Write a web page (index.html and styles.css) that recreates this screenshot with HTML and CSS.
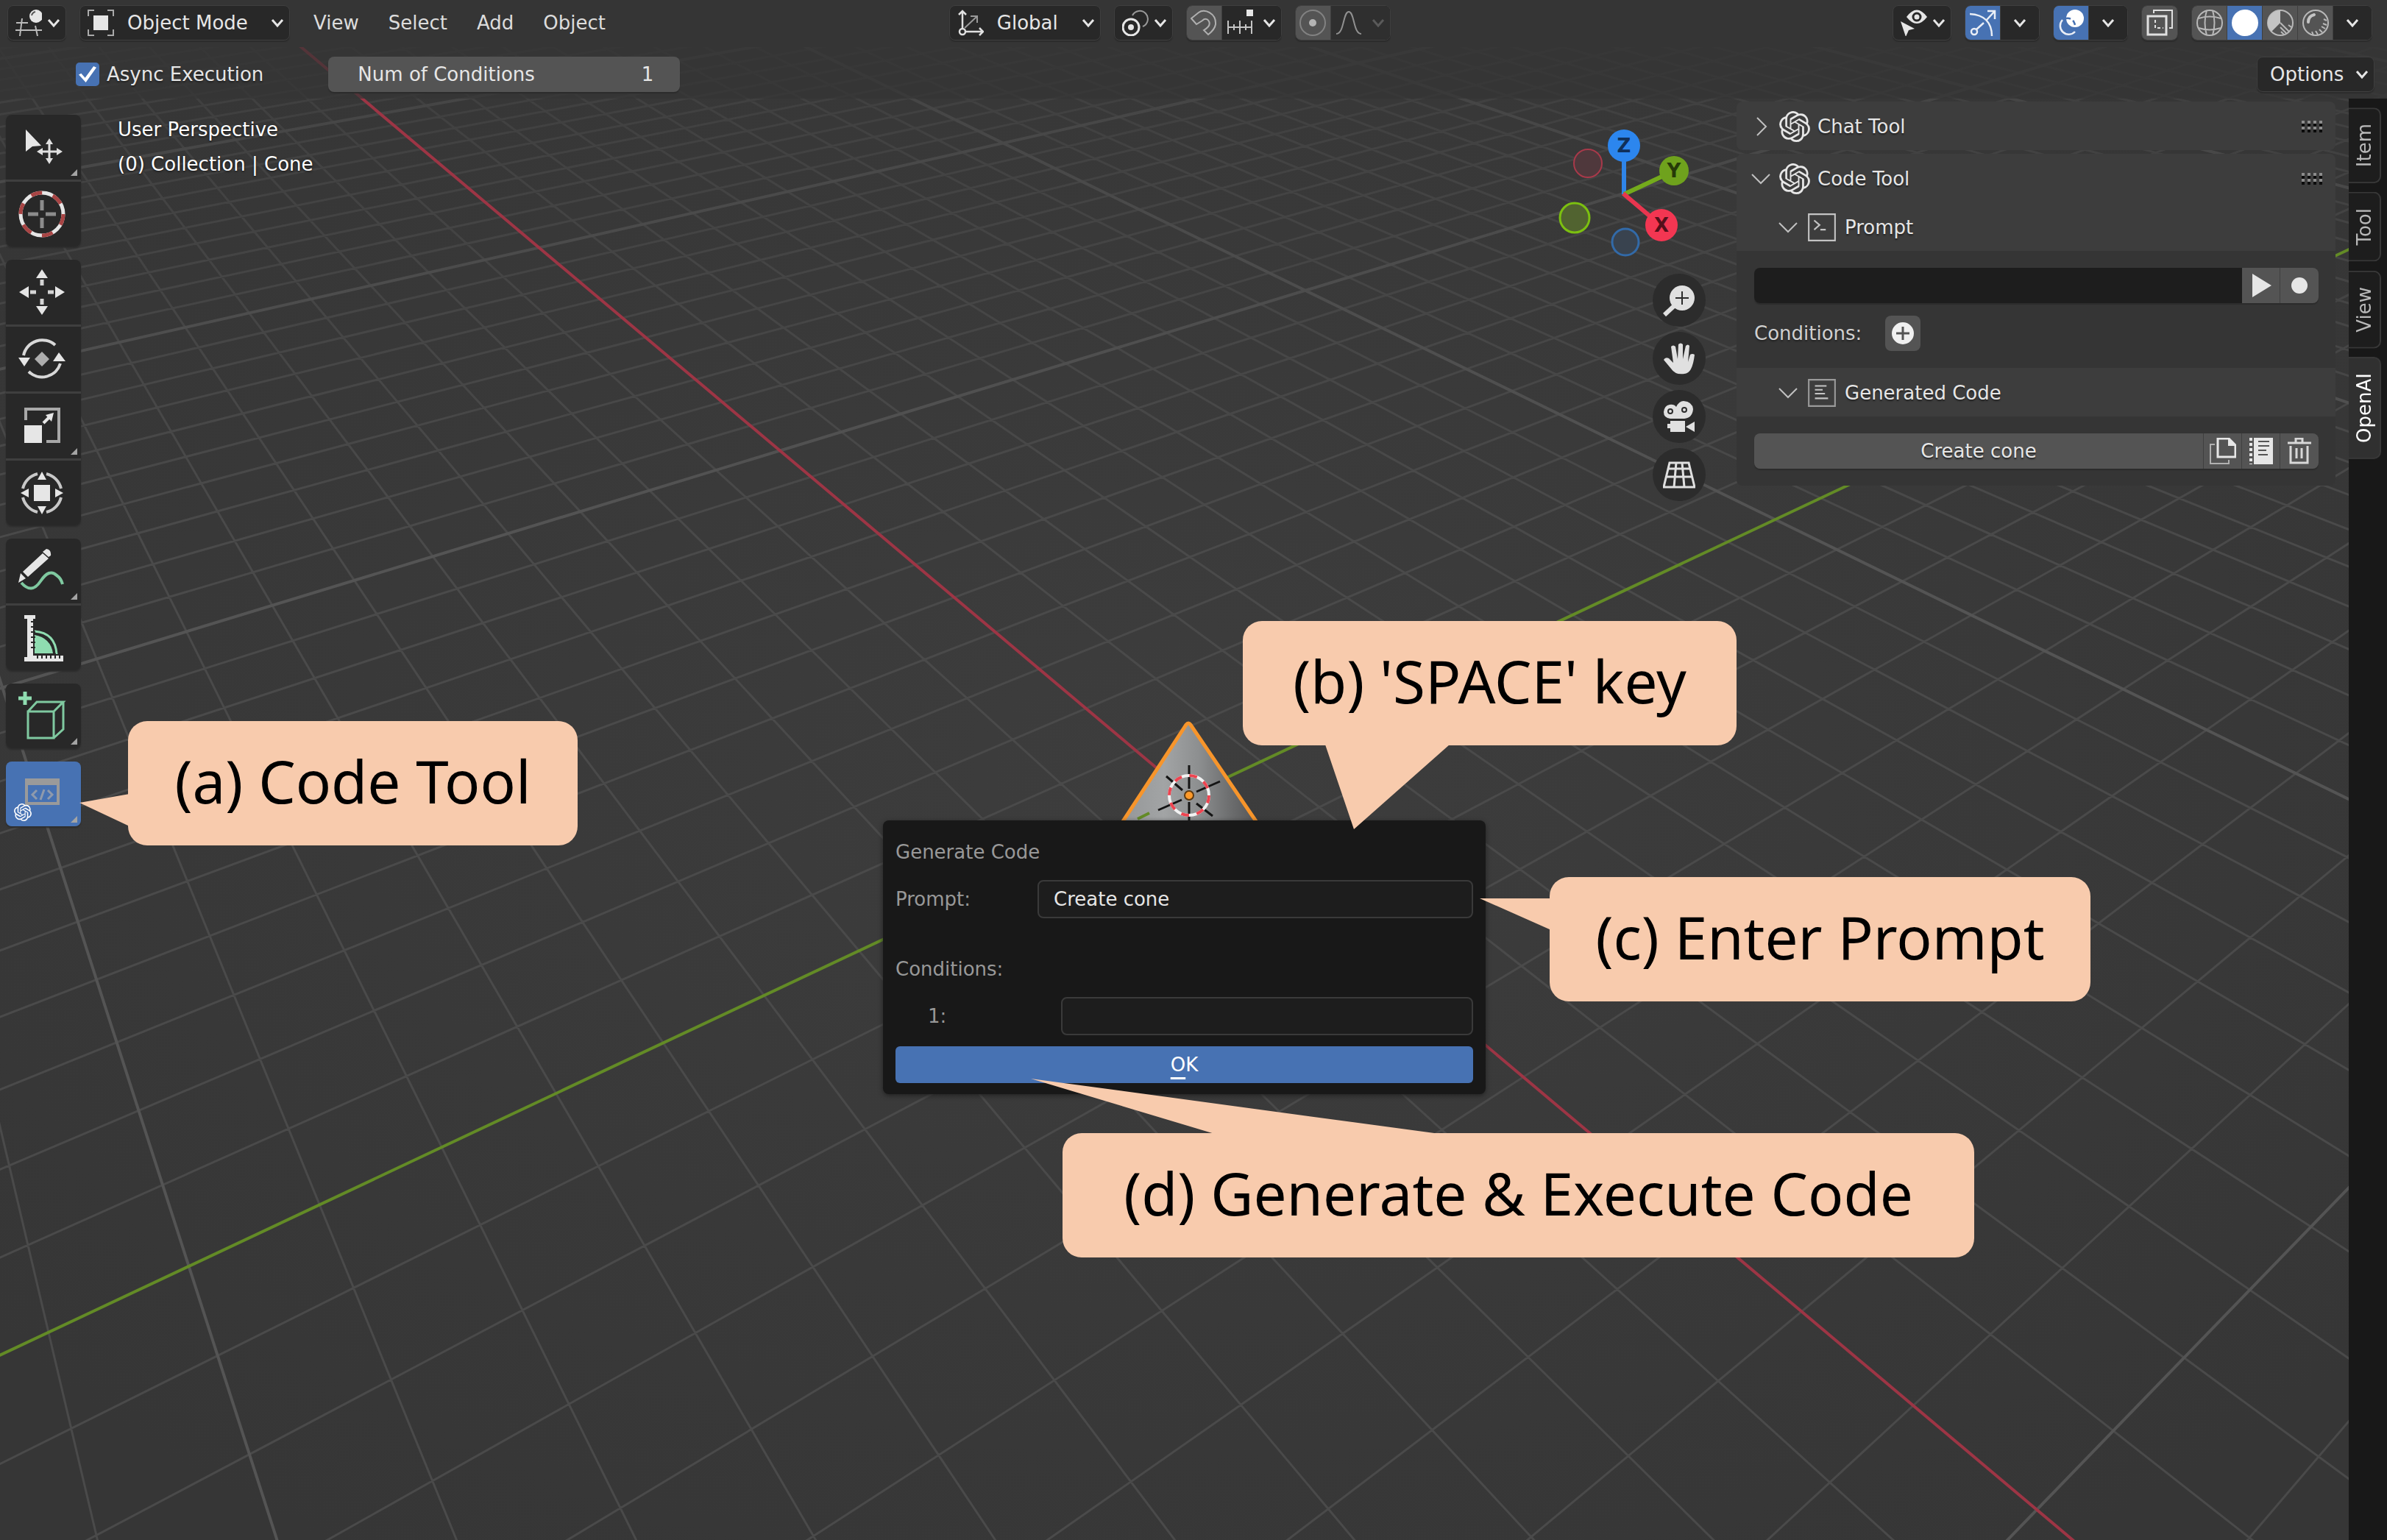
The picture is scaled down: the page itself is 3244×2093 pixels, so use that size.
FILE: index.html
```html
<!DOCTYPE html>
<html lang="en">
<head>
<meta charset="utf-8">
<title>3D Viewport</title>
<link rel="stylesheet" href="styles.css">
</head>
<body>
<svg class="defs" aria-hidden="true">
  <symbol id="chevron" viewBox="0 0 20 20"><path d="M3 6l7 8 7-8" fill="none" stroke="currentColor" stroke-width="3"/></symbol>
  <symbol id="chevron-thin" viewBox="0 0 28 28"><path d="M2 8l12 12L26 8" fill="none" stroke="currentColor" stroke-width="2"/></symbol>
  <symbol id="chevron-right" viewBox="0 0 28 28"><path d="M9 2l12 12L9 26" fill="none" stroke="currentColor" stroke-width="2"/></symbol>
  <symbol id="grip" viewBox="0 0 28 16"><path d="M0 6h28M0 14h28" fill="none" stroke="#0c0c0c" stroke-width="4" stroke-dasharray="4 4"/><path d="M0 2h28M0 10h28" fill="none" stroke="#8c8c8c" stroke-width="4" stroke-dasharray="4 4"/></symbol>
  <symbol id="knot" viewBox="0 0 24 24"><path fill="currentColor" d="M22.2819 9.8211a5.9847 5.9847 0 0 0-.5157-4.9108 6.0462 6.0462 0 0 0-6.5098-2.9A6.0651 6.0651 0 0 0 4.9807 4.1818a5.9847 5.9847 0 0 0-3.9977 2.9 6.0462 6.0462 0 0 0 .7427 7.0966 5.98 5.98 0 0 0 .511 4.9107 6.051 6.051 0 0 0 6.5146 2.9001A5.9847 5.9847 0 0 0 13.2599 24a6.0557 6.0557 0 0 0 5.7718-4.2058 5.9894 5.9894 0 0 0 3.9977-2.9001 6.0557 6.0557 0 0 0-.7475-7.0729zm-9.022 12.6081a4.4755 4.4755 0 0 1-2.8764-1.0408l.1419-.0804 4.7783-2.7582a.7948.7948 0 0 0 .3927-.6813v-6.7369l2.02 1.1686a.071.071 0 0 1 .038.052v5.5826a4.504 4.504 0 0 1-4.4945 4.4944zm-9.6607-4.1254a4.4708 4.4708 0 0 1-.5346-3.0137l.142.0852 4.783 2.7582a.7712.7712 0 0 0 .7806 0l5.8428-3.3685v2.3324a.0804.0804 0 0 1-.0332.0615L9.74 19.9502a4.4992 4.4992 0 0 1-6.1408-1.6464zM2.3408 7.8956a4.485 4.485 0 0 1 2.3655-1.9728V11.6a.7664.7664 0 0 0 .3879.6765l5.8144 3.3543-2.0201 1.1685a.0757.0757 0 0 1-.071 0l-4.8303-2.7865A4.504 4.504 0 0 1 2.3408 7.872zm16.5963 3.8558L13.1038 8.364 15.1192 7.2a.0757.0757 0 0 1 .071 0l4.8303 2.7913a4.4944 4.4944 0 0 1-.6765 8.1042v-5.6772a.79.79 0 0 0-.407-.667zm2.0107-3.0231l-.142-.0852-4.7735-2.7818a.7759.7759 0 0 0-.7854 0L9.409 9.2297V6.8974a.0662.0662 0 0 1 .0284-.0615l4.8303-2.7866a4.4992 4.4992 0 0 1 6.6802 4.66zM8.3065 12.863l-2.02-1.1638a.0804.0804 0 0 1-.038-.0567V6.0742a4.4992 4.4992 0 0 1 7.3757-3.4537l-.142.0805L8.704 5.459a.7948.7948 0 0 0-.3927.6813zm1.0976-2.3654l2.602-1.4998 2.6069 1.4998v2.9994l-2.5974 1.4997-2.6067-1.4997Z"/></symbol>
</svg>

<div class="app">
  <svg class="scene" viewBox="0 0 3244 2093" preserveAspectRatio="xMidYMid slice" aria-hidden="true">
    <defs>
      <radialGradient id="floor" cx="50%" cy="50%" r="62%"><stop offset="0" stop-color="#3d3d3d"/><stop offset="1" stop-color="#363636"/></radialGradient>
      <linearGradient id="fade" x1="0" y1="0" x2="0" y2="1"><stop offset="0" stop-color="#555"/><stop offset=".1" stop-color="#999"/><stop offset=".35" stop-color="#fff"/></linearGradient>
      <mask id="haze" maskUnits="userSpaceOnUse" x="0" y="0" width="3244" height="2093"><rect width="3244" height="2093" fill="url(#fade)"/></mask>
      <linearGradient id="cone"><stop offset="0" stop-color="#8f9192"/><stop offset=".35" stop-color="#a2a4a5"/><stop offset=".55" stop-color="#8d8f90"/><stop offset=".75" stop-color="#6a6b6c"/><stop offset="1" stop-color="#454546"/></linearGradient>
    </defs>
    <rect width="3244" height="2093" fill="url(#floor)"/>
    <g mask="url(#haze)" fill="none">
      <path id="grid-minor" stroke="#4a4a4a" stroke-width="3"/>
      <path id="grid-major" stroke="#545454" stroke-width="4"/>
    </g>
    <path id="axis-x" stroke="#9d3545" stroke-width="4" fill="none"/>
    <path id="axis-y" stroke="#638b26" stroke-width="4" fill="none"/>
    <path d="M1615 983L1500 1160H1734Z" fill="url(#cone)"/>
    <path d="M1500 1156L1612 985q3-4 6 0L1734 1156" fill="none" stroke="#f7952b" stroke-width="5"/>
    <path d="M1546 1113l16-8" stroke="#638b26" stroke-width="4"/>
    <g stroke="#141414" stroke-width="3"><path d="M1616 1040v32M1616 1090v30M1585 1055l22 19M1626 1092l22 17M1574 1101l32-14M1626 1076l32-14"/></g>
    <circle cx="1616" cy="1081" r="27" fill="none" stroke="#f2f2f2" stroke-width="4"/>
    <circle cx="1616" cy="1081" r="27" fill="none" stroke="#ee4450" stroke-width="4" stroke-dasharray="10.6 10.6"/>
    <circle cx="1616" cy="1081" r="6" fill="#ff9a2a" stroke="#5e3a10" stroke-width="2"/>
  </svg>

  <header class="bar">
    <button class="drop" aria-label="Editor type">
      <svg class="ico" viewBox="0 0 36 36"><circle cx="28" cy="9" r="9" fill="#e6e6e6"/><path d="M22 8q1-4 5-5" fill="none" stroke="#555" stroke-width="2"/><path d="M1 18h16M0 28h36M9 12L6 36M27 22l3 14" fill="none" stroke="#bbb" stroke-width="2"/></svg>
      <svg class="chev"><use href="#chevron"/></svg>
    </button>
    <label class="drop drop-mode">
      <svg class="ico" viewBox="0 0 36 36"><path d="M1 9V1h8M27 1h8v8M35 27v8h-8M9 35H1v-8" fill="none" stroke="#aaa" stroke-width="2"/><path d="M8 8h20v20H8z" fill="#e6e6e6"/></svg>
      <select aria-label="Mode"><option>Object Mode</option></select>
      <svg class="chev"><use href="#chevron"/></svg>
    </label>
    <nav class="menus"><button>View</button><button>Select</button><button>Add</button><button>Object</button></nav>
    <span class="space-a"></span>
    <div class="cluster">
      <label class="drop drop-orient">
        <svg class="ico" viewBox="0 0 36 36"><g fill="none" stroke="#e0e0e0" stroke-width="2.500"><path d="M7 26V3M2 7l5-5 5 5M11 30h23M30 25l5 5-5 5"/><circle cx="7" cy="30" r="4"/></g><path d="M10 25L26 10M18 9h9v9" fill="none" stroke="#999" stroke-width="2"/></svg>
        <select aria-label="Orientation"><option>Global</option></select>
        <svg class="chev"><use href="#chevron"/></svg>
      </label>
      <button class="drop" aria-label="Pivot point">
        <svg class="ico" viewBox="0 0 36 36"><circle cx="12" cy="24" r="11" fill="none" stroke="#e6e6e6" stroke-width="3"/><circle cx="12" cy="24" r="4" fill="#e6e6e6"/><path d="M14 8a11 11 0 1 1 14 15" fill="none" stroke="#999" stroke-width="2"/></svg>
        <svg class="chev"><use href="#chevron"/></svg>
      </button>
      <div class="group">
        <button class="cell" aria-label="Snap"><svg class="ico" viewBox="0 0 36 36"><path d="M1 12L11 4C19-2 35 5 34 20q-1 7-10 14l-6-6c7-4 9-8 7-12-2-4-6-4-9-1l-8 5z" fill="none" stroke="#b0b0b0" stroke-width="2"/></svg></button>
        <button class="cell wide" aria-label="Snap target"><svg class="ico" viewBox="0 0 36 36"><path d="M27 0h9v9h-9z" fill="#e6e6e6"/><path d="M2 15v18M18 15v18M34 15v18M2 24h32M10 20v8M26 20v8" stroke="#c4c4c4" stroke-width="2"/></svg><svg class="chev"><use href="#chevron"/></svg></button>
      </div>
      <div class="group">
        <button class="cell" aria-label="Proportional editing"><svg class="ico" viewBox="0 0 36 36"><circle cx="18" cy="18" r="17" fill="none" stroke="#828282" stroke-width="2"/><circle cx="18" cy="18" r="5" fill="#b4b4b4"/></svg></button>
        <button class="cell wide off" aria-label="Falloff"><svg class="ico" viewBox="0 0 36 36"><path d="M1 33c11 0 9-30 17-30s6 30 17 30" fill="none" stroke="#909090" stroke-width="2"/></svg><svg class="chev"><use href="#chevron"/></svg></button>
      </div>
    </div>
    <span class="space-b"></span>
    <div class="cluster">
      <button class="drop" aria-label="Selectability">
        <svg class="ico" viewBox="0 0 36 36"><path d="M8 10Q22-9 36 10 22 28 8 10z" fill="#e6e6e6"/><circle cx="22" cy="10" r="5" fill="#e6e6e6" stroke="#282828" stroke-width="3"/><path d="M0 16l19 10-8 2-4 9z" fill="#e6e6e6"/></svg>
        <svg class="chev"><use href="#chevron"/></svg>
      </button>
      <div class="group">
        <button class="cell on" aria-label="Gizmos"><svg class="ico" viewBox="0 0 36 36"><g fill="none" stroke="#e9eef6" stroke-width="2.500"><path d="M0 6C20 7 30 18 30 36M9 27l10-9M23 14L34 2M24 2h10v11"/><circle cx="6" cy="30" r="4"/></g></svg></button>
        <button class="cell arrow" aria-label="Gizmo options"><svg class="chev"><use href="#chevron"/></svg></button>
      </div>
      <div class="group">
        <button class="cell on" aria-label="Overlays"><svg class="ico" viewBox="0 0 36 36"><circle cx="23" cy="12" r="12" fill="#fff"/><path d="M6 14a11 11 0 1 0 17 16" fill="none" stroke="#e9eef6" stroke-width="2.500"/><path d="M11 12q8-1 11 6t0 9" fill="none" stroke="#4772b3" stroke-width="2.500" stroke-dasharray="6 4"/></svg></button>
        <button class="cell arrow" aria-label="Overlay options"><svg class="chev"><use href="#chevron"/></svg></button>
      </div>
      <div class="group"><button class="cell" aria-label="X-ray"><svg class="ico" viewBox="0 0 36 36"><g fill="none" stroke="#e0e0e0"><path d="M2 9h25v25H2z" stroke-width="3"/><path d="M10 5V1h25v24h-4" stroke-width="2"/><path d="M12 14v11h11" stroke-width="2" stroke-dasharray="4 3"/></g></svg></button></div>
      <div class="group">
        <button class="cell" aria-label="Wireframe"><svg class="ico" viewBox="0 0 36 36"><g fill="none" stroke="#b8b8b8" stroke-width="2"><circle cx="18" cy="18" r="17"/><path d="M3 12q15-5 30 0M3 25q15 5 30 0M14 1q-5 17 0 34M22 1q5 17 0 34"/></g></svg></button>
        <button class="cell on" aria-label="Solid"><svg class="ico" viewBox="0 0 36 36"><circle cx="18" cy="18" r="18" fill="#fff"/></svg></button>
        <button class="cell" aria-label="Material preview"><svg class="ico" viewBox="0 0 36 36"><circle cx="18" cy="18" r="17" fill="none" stroke="#b8b8b8" stroke-width="2"/><path d="M18 18V1A17 17 0 0 0 6 30z" fill="#c4c4c4"/><path d="M18 18l12 12M18 24l8 8M19 30l4 4M33 24l-4-3" stroke="#b8b8b8" stroke-width="2"/></svg></button>
        <button class="cell" aria-label="Rendered"><svg class="ico" viewBox="0 0 36 36"><circle cx="18" cy="18" r="17" fill="none" stroke="#b8b8b8" stroke-width="2"/><path d="M8 17q0-8 8-10" fill="none" stroke="#c4c4c4" stroke-width="4" stroke-linecap="round"/><path d="M33 15l-4-2M33 21l-5-2M31 26l-5-3M27 31l-4-4M21 34l-3-5M15 35l-2-5" stroke="#b8b8b8" stroke-width="2"/></svg></button>
        <button class="cell arrow" aria-label="Shading options"><svg class="chev"><use href="#chevron"/></svg></button>
      </div>
    </div>
  </header>

  <div class="settings">
    <label class="check"><input type="checkbox" checked>Async Execution</label>
    <label class="number"><span>Num of Conditions</span><input type="text" inputmode="numeric" value="1"></label>
    <button class="drop options">Options<svg class="chev"><use href="#chevron"/></svg></button>
  </div>

  <main class="view">
    <div class="tools">
      <div class="toolset">
        <button class="tool more" aria-label="Tweak"><svg viewBox="0 0 64 64"><path d="M10 8l21 22-12 1-9 7z" fill="#e6e6e6"/><path d="M42 27v22M31 38h22" stroke="#e0e0e0" stroke-width="3"/><path d="M42 20l5 8H37zM42 55l5-8H37zM25 38l8-5v10zM60 38l-8-5v10z" fill="#e0e0e0"/></svg></button>
        <button class="tool" aria-label="Cursor"><svg viewBox="0 0 64 64"><circle cx="32" cy="32" r="29" fill="none" stroke="#e6e6e6" stroke-width="5"/><circle cx="32" cy="32" r="29" fill="none" stroke="#a84444" stroke-width="5" stroke-dasharray="15.180 15.180"/><path d="M32 13v14M32 37v14M13 32h14M37 32h14" stroke="#8c8c8c" stroke-width="5"/></svg></button>
      </div>
      <div class="toolset">
        <button class="tool" aria-label="Move"><svg viewBox="0 0 64 64"><path d="M32 1l8 12H24zM32 63l8-12H24zM1 32l13-8v16zM63 32l-13-8v16z" fill="#e6e6e6"/><path d="M32 15v8M32 41v8M16 32h8M40 32h8" stroke="#d4d4d4" stroke-width="5"/></svg></button>
        <button class="tool" aria-label="Rotate"><svg viewBox="0 0 64 64"><path d="M7 27A26 26 0 0 1 50 13M57 38A26 26 0 0 1 14 49" fill="none" stroke="#d8d8d8" stroke-width="4"/><path d="M0 30h16L8 42zM47 35h17L55 23z" fill="#e6e6e6"/><path d="M32 22l10 10-10 10-10-10z" fill="#adadad"/></svg></button>
        <button class="tool more" aria-label="Scale"><svg viewBox="0 0 64 64"><path d="M10 24V9h45v44H38" fill="none" stroke="#a8a8a8" stroke-width="4"/><path d="M8 31h24v24H8z" fill="#e6e6e6"/><path d="M34 28l8-8" stroke="#e6e6e6" stroke-width="4"/><path d="M37 17l11-3-3 12z" fill="#e6e6e6"/></svg></button>
        <button class="tool" aria-label="Transform"><svg viewBox="0 0 64 64"><path d="M6 26A27 27 0 0 1 26 6M38 6a27 27 0 0 1 20 20M58 38a27 27 0 0 1-20 20M26 58A27 27 0 0 1 6 38" fill="none" stroke="#c8c8c8" stroke-width="4"/><path d="M21 21h22v22H21z" fill="#e6e6e6"/><path d="M32 3l6 11H26zM32 61l6-11H26zM3 32l11-6v12zM61 32l-11-6v12z" fill="#e6e6e6"/></svg></button>
      </div>
      <div class="toolset">
        <button class="tool more" aria-label="Annotate"><svg viewBox="0 0 64 64"><path d="M4 48q14 16 26-2t22-8q6 4 8 12" fill="none" stroke="#7fc9a0" stroke-width="4"/><path d="M3 35l7 7-10 6zM33 8l8 7-28 25-7-7zM38 2q7 1 6 9l-3 2-8-7z" fill="#e6e6e6"/></svg></button>
        <button class="tool" aria-label="Measure"><svg viewBox="0 0 64 64"><path d="M22 23q28 2 30 31" fill="none" stroke="#8fdcb0" stroke-width="3"/><path d="M22 28q22 4 25 25H22z" fill="#8fdcb0"/><path d="M8 1h15v5h-3v50h41v8H8v-6h4V6H8z" fill="#e6e6e6"/><path d="M17 10h6M17 17h6M17 24h6M17 31h6M17 38h6M17 45h6M26 53v7M32 53v7M38 53v7M44 53v7M50 53v7M56 53v7" stroke="#282828" stroke-width="2"/></svg></button>
      </div>
      <div class="toolset">
        <button class="tool more" aria-label="Add cube"><svg viewBox="0 0 64 64"><path d="M9-1v18M0 8h18" stroke="#8fdcb0" stroke-width="5"/><g fill="none" stroke="#7fc9a0" stroke-width="3"><path d="M13 26h35v36H13zM13 26l12-13h36L48 26M61 13v37L48 62"/></g></svg></button>
      </div>
      <div class="toolset">
        <button class="tool more active" aria-label="Code Tool"><svg viewBox="0 0 64 64"><path d="M11 13h43v32H11z" fill="none" stroke="#9a9a9a" stroke-width="4"/><path d="M9 11h47v9H9z" fill="#9a9a9a"/><path d="M25 27l-6 6 6 6M40 27l6 6-6 6M35 26l-5 14" fill="none" stroke="#8f9aac" stroke-width="3"/></svg><svg class="badge"><use href="#knot"/></svg></button>
      </div>
    </div>
    <p class="info">User Perspective<br>(0) Collection | Cone</p>

    <div class="nav">
      <svg class="gizmo" viewBox="0 0 180 178" role="img" aria-label="Orientation gizmo">
        <circle cx="40" cy="48" r="19" fill="#4f383c" stroke="#a8394a" stroke-width="2"/>
        <circle cx="22" cy="122" r="20" fill="#516330" stroke="#7cc010" stroke-width="3"/>
        <circle cx="91" cy="155" r="18" fill="#39434f" stroke="#326aa8" stroke-width="3"/>
        <path d="M89 90V40" stroke="#2f85e8" stroke-width="6"/><path d="M89 90l60-28" stroke="#74ab1c" stroke-width="6"/><path d="M88 89l46 39" stroke="#e8354f" stroke-width="6"/>
        <circle cx="89" cy="24" r="22" fill="#2c86ee"/><circle cx="157" cy="58" r="20" fill="#6fa21d"/><circle cx="140" cy="132" r="22" fill="#f33652"/>
        <g class="axis-name"><text x="89" y="33" fill="#10305a">Z</text><text x="157" y="67" fill="#263a08">Y</text><text x="140" y="141" fill="#550f1b">X</text></g>
      </svg>
      <button class="round" aria-label="Zoom"><svg viewBox="0 0 44 44"><circle cx="26" cy="19" r="17" fill="#e0e0e0"/><path d="M2 42l14-13" stroke="#e0e0e0" stroke-width="6"/><path d="M26 10v18M17 19h18" stroke="#2c2c2c" stroke-width="2"/></svg></button>
      <button class="round" aria-label="Pan"><svg viewBox="0 0 44 44"><path d="M1 24q2-4 7-2l6 6-3-22q3-3 6 0l3 17 1-20q3-3 6 0v20l4-18q3-3 5 0l-2 22 3-10q3-2 6 0-3 26-14 26-12 2-18-7z" fill="#e0e0e0"/></svg></button>
      <button class="round" aria-label="Camera"><svg viewBox="0 0 44 44"><path d="M9 6q6-1 9 3Q22 1 28 1q12 1 13 11-1 12-12 13H10Q1 24 1 16 2 7 9 6zM10 28h20v15H10V38H6v-6h4zM31 36l12-7v14z" fill="#e0e0e0"/><circle cx="10" cy="15" r="3" fill="none" stroke="#2c2c2c" stroke-width="2"/><circle cx="29" cy="13" r="3" fill="none" stroke="#2c2c2c" stroke-width="2"/></svg></button>
      <button class="round" aria-label="Perspective"><svg viewBox="0 0 44 44"><path d="M9 6h26l8 33H1zM7 14h30M5 25h34M18 6l-3 33M26 6l3 33" fill="none" stroke="#e0e0e0" stroke-width="3"/></svg></button>
    </div>

    <aside class="side">
      <section class="panel">
        <h2 class="head"><svg class="fold"><use href="#chevron-right"/></svg><svg class="logo"><use href="#knot"/></svg>Chat Tool<svg class="grip"><use href="#grip"/></svg></h2>
      </section>
      <section class="panel">
        <h2 class="head"><svg class="fold"><use href="#chevron-thin"/></svg><svg class="logo"><use href="#knot"/></svg>Code Tool<svg class="grip"><use href="#grip"/></svg></h2>
        <h3 class="head sub"><svg class="fold"><use href="#chevron-thin"/></svg><svg class="logo" viewBox="0 0 40 40"><path d="M3 3h34v34H3z" fill="none" stroke="#c4c4c4" stroke-width="2"/><path d="M10 11l7 6-7 6M18 23h7" fill="none" stroke="#c4c4c4" stroke-width="2"/></svg>Prompt</h3>
        <div class="body">
          <div class="row"><input class="prompt" type="text" aria-label="Prompt text"><button class="cell" aria-label="Run"><svg class="ico" viewBox="0 0 36 36"><path d="M6 2l26 16L6 34z" fill="#e6e6e6"/></svg></button><button class="cell" aria-label="Record"><svg class="ico" viewBox="0 0 36 36"><circle cx="18" cy="18" r="11" fill="#e6e6e6"/></svg></button></div>
          <div class="cond">Conditions:<button class="cell add" aria-label="Add condition"><svg class="ico" viewBox="0 0 36 36"><circle cx="18" cy="18" r="15" fill="#f0f0f0"/><path d="M18 9v18M9 18h18" stroke="#545454" stroke-width="3"/></svg></button></div>
        </div>
        <h3 class="head sub"><svg class="fold"><use href="#chevron-thin"/></svg><svg class="logo" viewBox="0 0 40 40"><path d="M3 3h34v34H3z" fill="none" stroke="#9a9a9a" stroke-width="2"/><path d="M11 11h15M11 16h10M11 21h13M11 27h17" stroke="#c4c4c4" stroke-width="2"/></svg>Generated Code</h3>
        <div class="body">
          <div class="row"><button class="cell fill">Create cone</button><button class="cell" aria-label="Copy"><svg class="ico" viewBox="0 0 36 36"><path d="M11 1h15l9 9v16H11z" fill="none" stroke="#e6e6e6" stroke-width="3"/><path d="M25 1v10h10z" fill="#e6e6e6"/><path d="M7 9H1v26h25v-5" fill="none" stroke="#b0b0b0" stroke-width="2"/></svg></button><button class="cell" aria-label="Edit"><svg class="ico" viewBox="0 0 36 36"><path d="M8 0h26v36H8z" fill="#e6e6e6"/><path d="M4 0v36" stroke="#e6e6e6" stroke-width="4" stroke-dasharray="4 3"/><path d="M14 5h15M14 11h15M14 17h11M14 23h13" stroke="#545454" stroke-width="2"/></svg></button><button class="cell" aria-label="Delete"><svg class="ico" viewBox="0 0 36 36"><path d="M2 7h32M13 6V1h9v5M6 11v23h23V11M14 14v14M21 14v14" fill="none" stroke="#d8d8d8" stroke-width="3"/></svg></button></div>
        </div>
      </section>
    </aside>

    <nav class="tabs"><button>Item</button><button>Tool</button><button>View</button><button class="current">OpenAI</button></nav>
  </main>

  <form class="dialog">
    <h2>Generate Code</h2>
    <label class="field"><span>Prompt:</span><input type="text" value="Create cone"></label>
    <h3>Conditions:</h3>
    <label class="field indent"><span>1:</span><input type="text"></label>
    <button type="button" class="ok"><u>O</u>K</button>
  </form>

  <svg class="tails" viewBox="0 0 3244 2093" preserveAspectRatio="xMidYMid slice" aria-hidden="true"><path d="M108 1091l68-12v44zM1801 1012h169l-130 115zM2011 1221h97v43zM1401 1466l563 76h-310z"/></svg>
  <p class="callout call-a">(a) Code Tool</p>
  <p class="callout call-b">(b) 'SPACE' key</p>
  <p class="callout call-c">(c) Enter Prompt</p>
  <p class="callout call-d">(d) Generate &amp; Execute Code</p>
</div>
<script src="grid.js"></script>
</body>
</html>
```
FILE: styles.css
```css
* { box-sizing: border-box; }
body { margin: 0; background: #393939; color: #e6e6e6; font: 26px/32px "DejaVu Sans", sans-serif; }
button, input, select { font: inherit; color: inherit; border: 0; background: none; padding: 0; margin: 0; }
h2, h3, p { margin: 0; font: inherit; }
.defs { position: absolute; width: 0; height: 0; }
.app { position: relative; min-height: 100vh; display: flex; flex-direction: column; overflow: hidden; }
.scene, .tails { position: absolute; inset: 0; width: 100%; height: 100%; }
.tails { fill: #f8cbad; pointer-events: none; }

.ico { width: 36px; height: 36px; flex: none; }
.chev { width: 20px; height: 20px; flex: none; }

/* header */
.bar { position: relative; display: flex; align-items: center; height: 64px; padding: 0 20px 2px 10px; background: #353535; gap: 18px; }
.drop { display: flex; align-items: center; justify-content: space-between; gap: 6px; height: 48px; padding: 0 6px 0 10px; background: #282828; border: 1px solid #3f3f3f; border-radius: 8px; box-shadow: 0 2px 1px #2c2c2c; }
.drop select { flex: 1; appearance: none; margin-left: 12px; outline: 0; }
.drop-mode { width: 286px; }
.drop-orient { width: 206px; }
.menus { display: flex; gap: 40px; margin-left: 14px; color: #dcdcdc; }
.space-a { flex: 2; }
.space-b { flex: 3; }
.cluster { display: flex; gap: 18px; }
.group { display: flex; height: 48px; border: 1px solid #3f3f3f; border-radius: 8px; background: #282828; overflow: hidden; box-shadow: 0 2px 1px #2c2c2c; }
.cell { display: flex; align-items: center; justify-content: center; min-width: 48px; background: #545454; border-right: 1px solid #3f3f3f; }
.cell:last-child { border-right: 0; }
.cell.on { background: #4772b3; }
.cell.wide { gap: 12px; padding: 0 6px; background: #282828; }
.cell.off { background: #2f2f2f; }
.cell.off .chev { color: #5a5a5a; }
.cell.arrow { background: #282828; min-width: 52px; }

/* tool settings */
.settings { position: relative; display: flex; align-items: center; height: 70px; padding: 4px 17px 0 103px; background: rgba(53, 53, 53, .7); }
.check { display: flex; align-items: center; gap: 10px; text-shadow: 0 2px 2px #222; }
.check input { appearance: none; width: 32px; height: 32px; border-radius: 5px; background: #4772b3; display: grid; place-items: center; }
.check input:checked::before { content: ""; width: 24px; height: 22px; background: #fff; clip-path: polygon(0 52%, 14% 44%, 36% 72%, 84% 0, 100% 8%, 40% 100%); }
.number { display: flex; align-items: center; justify-content: space-between; width: 478px; height: 48px; margin-left: 88px; padding: 0 36px 0 40px; background: #545454; border-radius: 8px; box-shadow: 0 2px 1px #2c2c2c; }
.number input { width: 60px; text-align: right; }
.options { margin-left: auto; width: 160px; padding-left: 17px; }

/* viewport */
.view { position: relative; flex: 1; display: flex; align-items: stretch; }
.tools { display: flex; flex-direction: column; gap: 18px; padding: 22px 0 0 8px; }
.toolset { display: flex; flex-direction: column; gap: 3px; width: 102px; border-radius: 8px; background: #3f3f3f; overflow: hidden; box-shadow: 0 2px 2px #2c2c2c; }
.tool { position: relative; display: grid; place-items: center; height: 88px; padding-right: 4px; background: #282828; }
.tool svg { width: 64px; height: 64px; overflow: visible; }
.tool.more::after { content: ""; position: absolute; right: 5px; bottom: 5px; width: 9px; height: 9px; background: #a4a4a4; clip-path: polygon(100% 0, 100% 100%, 0 100%); }
.tool.active { background: #4772b3; }
.tool .badge { position: absolute; left: 11px; bottom: 7px; width: 24px; height: 24px; color: #fff; }
.info { padding: 19px 0 0 50px; line-height: 47px; color: #fff; text-shadow: 0 1px 3px #111; }
.nav { display: flex; flex-direction: column; align-items: flex-end; gap: 7px; margin-left: auto; padding-top: 40px; }
.gizmo { width: 180px; height: 178px; margin: 0 20px 13px 0; }
.axis-name { font: bold 26px "DejaVu Sans", sans-serif; text-anchor: middle; }
.round { display: grid; place-items: center; width: 72px; height: 72px; border-radius: 50%; background: #2c2c2c; }
.round svg { width: 44px; height: 44px; }

/* sidebar */
.side { display: flex; flex-direction: column; gap: 5px; width: 814px; margin: 4px 18px 0 42px; }
.panel { border-radius: 8px; background: #3d3d3d; overflow: hidden; text-shadow: 0 2px 2px #222; }
.head { display: flex; align-items: center; height: 66px; padding: 2px 18px 0 19px; }
.sub { padding-left: 56px; }
.fold { width: 28px; height: 28px; margin-right: 11px; color: #c0c0c0; }
.logo { width: 42px; height: 42px; margin-right: 10px; }
.grip { width: 28px; height: 16px; margin-left: auto; }
.body { padding: 23px 23px 23px 24px; background: #353535; }
.row { display: flex; height: 48px; border-radius: 8px; overflow: hidden; box-shadow: 0 2px 1px #2c2c2c; }
.row .cell { width: 52px; }
.prompt { flex: 1; background: #1d1d1d; }
.row .cell.fill { flex: 1; text-shadow: inherit; }
.cond { display: flex; align-items: center; gap: 32px; height: 48px; margin-top: 17px; color: #d0d0d0; }
.cell.add { height: 48px; border-radius: 8px; }
.tabs { display: flex; flex-direction: column; gap: 12px; width: 52px; padding: 12px 8px 0 0; background: #181818; }
.tabs button { writing-mode: vertical-rl; rotate: 180deg; padding: 20px 4px; width: 44px; color: #b8b8b8; background: #1d1d1d; border: 2px solid #383838; border-right: 0; border-radius: 10px 0 0 10px; line-height: 32px; }
.tabs .current { background: #303030; color: #fff; }

/* popup */
.dialog { position: absolute; left: 1200px; top: 1115px; width: 819px; padding: 27px 17px 15px; background: #181818; border-radius: 8px; box-shadow: 0 2px 6px #222; color: #989898; }
.dialog h3 { margin-top: 53px; }
.field { display: flex; align-items: center; height: 52px; margin-top: 22px; }
.field span { flex: none; width: 193px; }
.field input { flex: 1; min-width: 0; height: 52px; padding: 0 20px; color: #e6e6e6; background: #1d1d1d; border: 2px solid #3a3a3a; border-radius: 8px; }
.field.indent { padding-left: 44px; }
.field.indent span { width: 181px; }
.ok { display: block; width: 100%; height: 50px; margin-top: 15px; background: #4772b3; border-radius: 6px; color: #fff; }
.ok u { text-underline-offset: 8px; text-decoration-thickness: 3px; }

/* annotations */
.callout { position: absolute; display: grid; place-items: center; height: 169px; border-radius: 26px; background: #f8cbad; color: #000; font: 80px/160px "Noto Sans", sans-serif; padding-bottom: 8px; white-space: nowrap; }
.call-a { left: 174px; top: 980px; width: 611px; }
.call-b { left: 1689px; top: 844px; width: 671px; }
.call-c { left: 2106px; top: 1192px; width: 735px; }
.call-d { left: 1444px; top: 1540px; width: 1239px; }
```
FILE: grid.js
```js
// Projects the ground plane (1 unit cells, brighter every 10) into the scene.
const origin = [1616, 1081];
const vanishX = [-533, -730];
const vanishY = [5463, -730];
const cx = -0.0349;
const cy = 0.02611;
const NEAR = 0.15;
const FAR = 150;
const COUNT = 80;

function project(u, v) {
  const w = 1 + cx * u + cy * v;
  return [0, 1].map(i => ((origin[i] + cx * u * vanishX[i] + cy * v * vanishY[i]) / w).toFixed(1)).join(' ');
}
function alongX(v) {
  const end = (1 + cy * v - NEAR) / -cx;
  return end > -FAR ? `M${project(-FAR, v)}L${project(end, v)}` : '';
}
function alongY(u) {
  const start = (NEAR - 1 - cx * u) / cy;
  return start < FAR ? `M${project(u, start)}L${project(u, FAR)}` : '';
}

let minor = '';
let major = '';
for (let k = -COUNT; k <= COUNT; k++) {
  if (k === 0) continue;
  const d = alongX(k) + alongY(k);
  if (k % 10 === 0) major += d; else minor += d;
}
document.getElementById('grid-minor').setAttribute('d', minor);
document.getElementById('grid-major').setAttribute('d', major);
document.getElementById('axis-x').setAttribute('d', alongX(0));
document.getElementById('axis-y').setAttribute('d', alongY(0));
```
